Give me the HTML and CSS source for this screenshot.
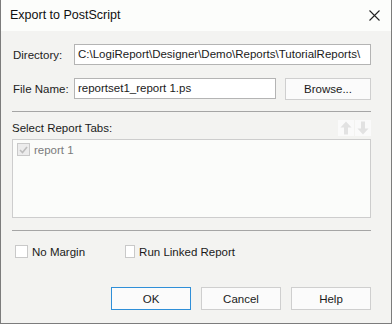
FILE: index.html
```html
<!DOCTYPE html>
<html lang="en">
<head>
    <meta charset="UTF-8">
    <title>Export to PostScript</title>
    <link rel="stylesheet" href="styles.css">
</head>
<body>
<div class="window">
    <div class="titlebar">
        <span class="title">Export to PostScript</span>
        <svg class="close" width="11" height="11" viewBox="0 0 11 11">
            <path d="M0.5 0.5 L10.5 10.5 M10.5 0.5 L0.5 10.5" stroke="#222" stroke-width="1.1" fill="none"/>
        </svg>
    </div>

    <div class="content">
        <!-- file inputs -->
        <div class="row">
            <label class="label">Directory:</label>
            <div class="field grow">C:\LogiReport\Designer\Demo\Reports\TutorialReports\</div>
        </div>
        <div class="row">
            <label class="label">File Name:</label>
            <div class="field name">reportset1_report 1.ps</div>
            <button class="btn browse">Browse...</button>
        </div>

        <hr class="sep">

        <!-- report tabs -->
        <div class="tabs-head">
            <span>Select Report Tabs:</span>
            <span class="arrows">
                <span class="arrow"><svg width="12" height="14" viewBox="0 0 12 14"><path d="M6 0.5 L11.5 6.5 L8 6.5 L8 13.5 L4 13.5 L4 6.5 L0.5 6.5 Z" fill="#e2e2e2"/></svg></span>
                <span class="arrow"><svg width="12" height="14" viewBox="0 0 12 14"><path d="M6 13.5 L11.5 7.5 L8 7.5 L8 0.5 L4 0.5 L4 7.5 L0.5 7.5 Z" fill="#e2e2e2"/></svg></span>
            </span>
        </div>
        <div class="list">
            <div class="item">
                <span class="check disabled">
                    <svg width="9" height="8" viewBox="0 0 9 8"><path d="M1 4 L3.5 6.5 L8 1" stroke="#bdbdbd" stroke-width="1.6" fill="none"/></svg>
                </span>
                <span>report 1</span>
            </div>
        </div>

        <hr class="sep low">

        <!-- options -->
        <div class="options">
            <label class="opt"><span class="check"></span>No Margin</label>
            <label class="opt"><span class="check"></span>Run Linked Report</label>
        </div>

        <div class="buttons">
            <button class="btn default">OK</button>
            <button class="btn">Cancel</button>
            <button class="btn">Help</button>
        </div>
    </div>
</div>
</body>
</html>
```

FILE: styles.css
```css
body {
    margin: 0;
    font-family: "Liberation Sans", Arial, sans-serif;
    font-size: 11.5px;
    color: #1a1a1a;
}
.window {
    width: 390px;
    height: 323px;
    border: 1px solid #7c7c7c;
    border-top: none;
    background-color: #f3f3f1;
}
.titlebar {
    height: 31px;
    background-color: #fcfdfb;
    display: flex;
    align-items: center;
    justify-content: space-between;
    padding: 0 11px 0 9px;
}
.title {
    font-size: 12.5px;
    color: #101010;
    margin-top: -1px;
}
.content {
    padding: 13px 20px 0 10px;
}
.row {
    display: flex;
    align-items: center;
    margin-bottom: 13px;
    height: 21px;
}
.label {
    width: 61px;
    padding-left: 2px;
    color: #222;
}
.field {
    height: 21px;
    box-sizing: border-box;
    border: 1px solid #b4b4b4;
    background-color: #ffffff;
    padding: 0 3px;
    line-height: 19px;
    white-space: nowrap;
    overflow: hidden;
}
.grow {
    flex: 1;
}
.name {
    width: 202px;
}
.btn {
    font-family: inherit;
    font-size: 11.5px;
    color: #1a1a1a;
    width: 80px;
    height: 23px;
    border: 1px solid #cfcfcf;
    background-color: #fbfbfb;
    padding: 0;
}
.browse {
    width: 86px;
    height: 22px;
    margin-left: auto;
}
.default {
    border-color: #2f8fd8;
}
.sep {
    border: none;
    border-top: 1px solid #a5a5a5;
    margin: -1px 0 0 1px;
}
.tabs-head {
    display: flex;
    justify-content: space-between;
    align-items: center;
    margin-top: 8px;
    height: 16px;
    padding-left: 1px;
}
.arrows {
    display: flex;
    gap: 1px;
}
.arrow {
    width: 16px;
    height: 16px;
    display: flex;
    align-items: center;
    justify-content: center;
    background-color: #fafafa;
}
.list {
    margin: 3px 0 0 1px;
    height: 79px;
    border: 1px solid #cdcdcd;
    background-color: #fbfcfa;
    padding: 3px 0 0 4px;
    box-sizing: border-box;
}
.item {
    display: flex;
    align-items: center;
    gap: 4px;
    color: #7a7a7a;
}
.check {
    width: 11px;
    height: 11px;
    border: 1px solid #c9c9c9;
    background-color: #ffffff;
    display: inline-flex;
    align-items: center;
    justify-content: center;
}
.check.disabled {
    background-color: #ececec;
}
.low {
    margin-top: 12px;
}
.options {
    display: flex;
    margin-top: 14px;
    padding-left: 4px;
    height: 13px;
    align-items: center;
}
.opt {
    display: flex;
    align-items: center;
    gap: 4px;
    width: 110px;
    white-space: nowrap;
}
.buttons {
    display: flex;
    justify-content: flex-end;
    gap: 10px;
    margin-top: 29px;
}
```
